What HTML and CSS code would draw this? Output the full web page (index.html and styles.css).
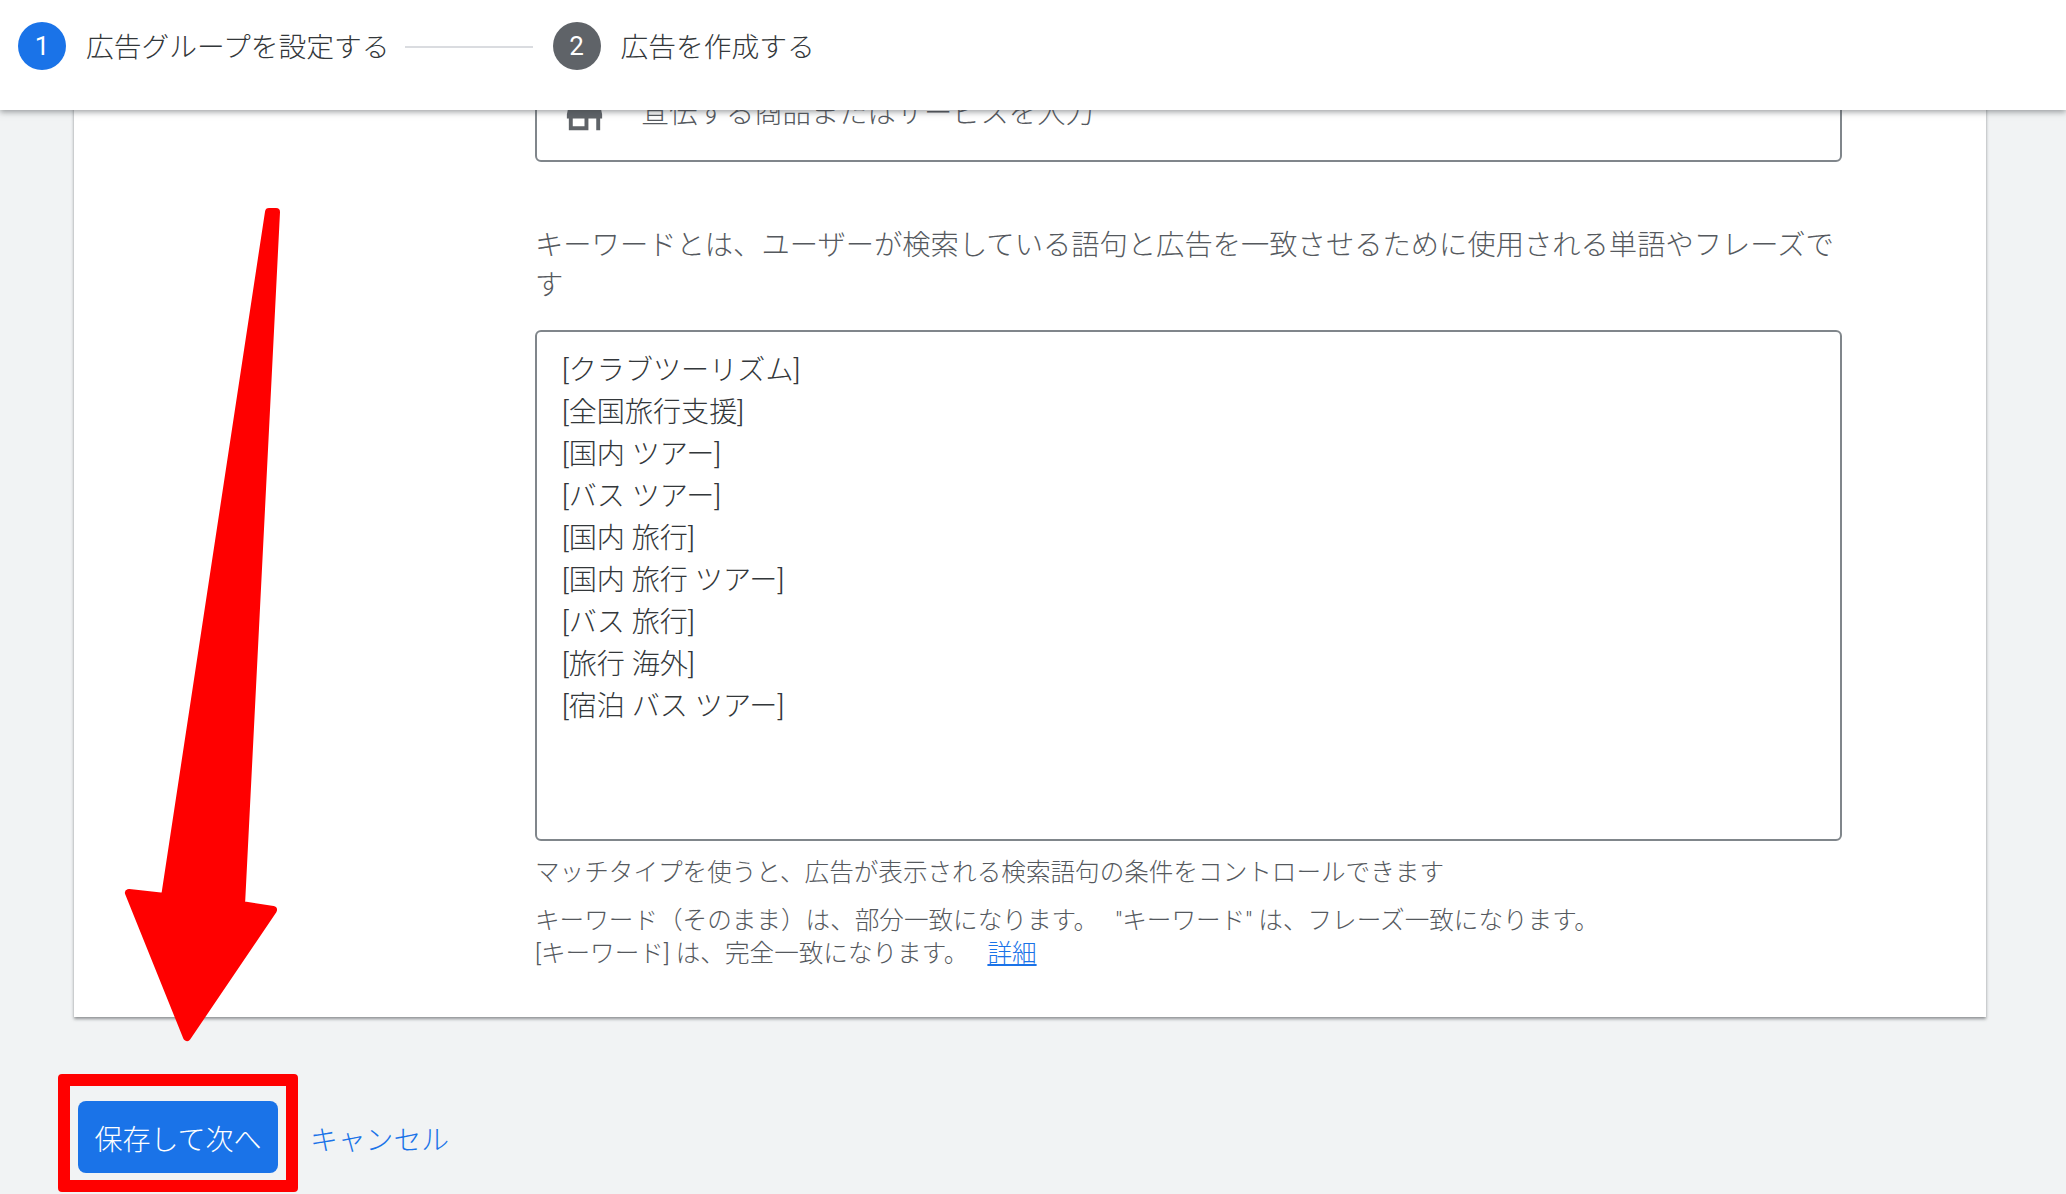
FILE: index.html
```html
<!DOCTYPE html>
<html lang="ja">
<head>
<meta charset="utf-8">
<title>広告グループを設定する</title>
<link rel="stylesheet" href="styles.css">
</head>
<body>
<header class="stepper">
  <div class="step"><span class="badge badge-active">1</span><span class="step-label">広告グループを設定する</span></div>
  <div class="step-line"></div>
  <div class="step"><span class="badge">2</span><span class="step-label">広告を作成する</span></div>
</header>
<main class="page">
  <section class="panel">
    <div class="field">
      <div class="product-box">
        <svg class="store" viewBox="0 0 24 24"><path d="M20 4H4v2h16V4zm1 10v-2l-1-5H4l-1 5v2h1v6h10v-6h4v6h2v-6h1zm-9 4H6v-4h6v4z"/></svg>
        <span class="product-hint">宣伝する商品またはサービスを入力</span>
      </div>
      <p class="intro">キーワードとは、ユーザーが検索している語句と広告を一致させるために使用される単語やフレーズです</p>
      <div class="keywords">
        <div>[クラブツーリズム]</div>
        <div>[全国旅行支援]</div>
        <div>[国内 ツアー]</div>
        <div>[バス ツアー]</div>
        <div>[国内 旅行]</div>
        <div>[国内 旅行 ツアー]</div>
        <div>[バス 旅行]</div>
        <div>[旅行 海外]</div>
        <div>[宿泊 バス ツアー]</div>
      </div>
      <p class="note note-first">マッチタイプを使うと、広告が表示される検索語句の条件をコントロールできます</p>
      <p class="note">キーワード（そのまま）は、部分一致になります。 <span class="phrase">"キーワード" は、フレーズ一致になります。</span><br>[キーワード] は、完全一致になります。 <a class="more" href="#">詳細</a></p>
    </div>
  </section>
  <div class="actions">
    <button class="save" type="button">保存して次へ</button>
    <a class="cancel" href="#">キャンセル</a>
  </div>
</main>
<div class="callout-box"></div>
<svg class="callout-arrow" viewBox="0 0 2066 1194"><path d="M269 212 L276 212 L241 905 L273 910 L187 1037 L129 893 L165 897 Z"/></svg>
</body>
</html>
```
FILE: styles.css
```css
* { box-sizing: border-box; }
html, body { margin: 0; height: 100%; overflow: hidden; }
body {
  background: #f1f3f4;
  font-family: "Roboto", "Noto Sans CJK JP", sans-serif;
  font-weight: 300;
  color: #33373a;
  position: relative;
}
.stepper {
  position: relative;
  z-index: 2;
  height: 110px;
  background: #fff;
  display: flex;
  align-items: flex-start;
  padding: 22px 0 0 18px;
  box-shadow: 0 2px 6px rgba(60, 64, 67, .5);
}
.step { display: flex; align-items: center; gap: 20px; }
.badge {
  width: 48px;
  height: 48px;
  border-radius: 50%;
  background: #5f6368;
  color: #fff;
  font-size: 26px;
  font-weight: 400;
  display: flex;
  align-items: center;
  justify-content: center;
}
.badge-active { background: #1a73e8; }
.step-label { font-size: 27.75px; line-height: 40px; margin-top: 3px; color: #33373a; white-space: nowrap; }
.step-line { width: 128px; height: 2px; background: #dadce0; margin: 24px 20px 0 15px; }
.page { margin-top: -60px; padding: 0 80px 0 74px; }
.panel {
  background: #fff;
  height: 967px;
  box-shadow: 0 2px 3px rgba(60, 64, 67, .55);
  padding: 0 144px 0 461px;
}
.product-box {
  height: 112px;
  border: 2px solid #80868b;
  border-radius: 6px;
  display: flex;
  align-items: flex-end;
  padding: 0 0 22px 24px;
}
.store { width: 47px; height: 47px; fill: #5f6368; flex: none; }
.product-hint { font-size: 28.3px; color: #55595e; margin: 0 0 2px 33px; line-height: 44px; }
.intro {
  margin: 64px 0 0;
  font-size: 28.3px;
  line-height: 40px;
  color: #55595e;
}
.keywords {
  margin-top: 24px;
  height: 511px;
  border: 2px solid #80868b;
  border-radius: 6px;
  padding: 18px 25px;
  font-size: 28.1px;
  line-height: 42px;
  color: #33373a;
}
.note {
  margin: 0;
  font-size: 24.6px;
  line-height: 33px;
  color: #55595e;
}
.note-first { margin: 15px 0 15px; }
.phrase { margin-left: 11px; }
.more { color: #1a73e8; margin-left: 13px; }
.actions {
  display: flex;
  align-items: center;
  gap: 32px;
  margin: 84px 0 0 4px;
}
.save {
  width: 200px;
  height: 72px;
  border: 0;
  border-radius: 8px;
  background: #1a73e8;
  color: #fff;
  font: inherit;
  font-size: 28px;
  padding: 2px 0 0;
}
.cancel { color: #1a73e8; font-size: 27.8px; margin-top: 2px; text-decoration: none; }
.callout-box {
  position: absolute;
  left: 58px;
  top: 1074px;
  width: 240px;
  height: 118px;
  border: 12px solid #ff0000;
  border-radius: 4px;
  z-index: 3;
}
.callout-arrow {
  position: absolute;
  left: 0;
  top: 0;
  width: 2066px;
  height: 1194px;
  z-index: 3;
  pointer-events: none;
}
.callout-arrow path {
  fill: #ff0000;
  stroke: #ff0000;
  stroke-width: 8;
  stroke-linejoin: round;
}
```
